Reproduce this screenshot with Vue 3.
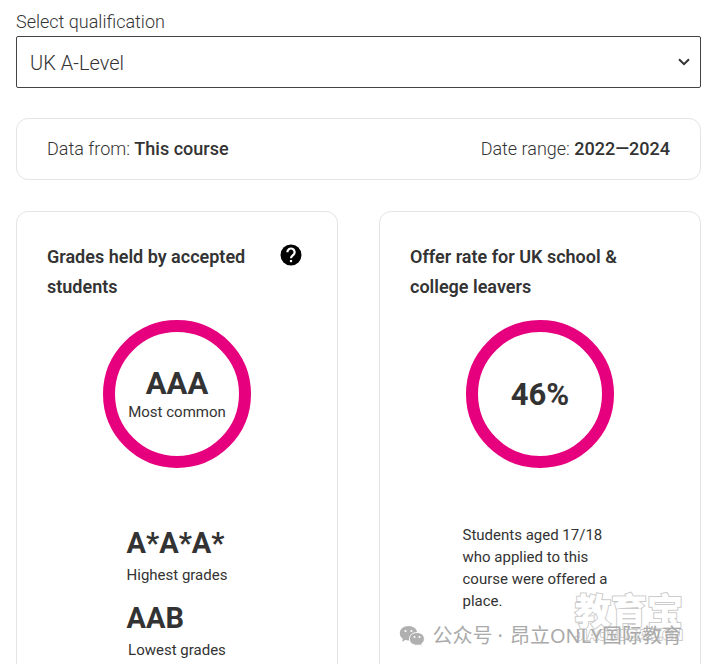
<script setup>
import { ref } from 'vue'

const qualification = ref('UK A-Level')
const qualifications = ['UK A-Level', 'Scottish Higher', 'International Baccalaureate']
</script>

<template>
  <main class="page">
    <div class="field">
      <label class="field-label" for="qualification">Select qualification</label>
      <div class="select-wrap">
        <select id="qualification" v-model="qualification" class="select">
          <option v-for="q in qualifications" :key="q">{{ q }}</option>
        </select>
        <svg class="chevron" viewBox="0 0 14 10" aria-hidden="true">
          <path d="M2 2.3 7 7.2 12 2.3" fill="none" stroke="#333" stroke-width="2" />
        </svg>
      </div>
    </div>

    <section class="summary">
      <p>Data from: <strong>This course</strong></p>
      <p>Date range: <strong>2022—2024</strong></p>
    </section>

    <div class="cards">
      <section class="card">
        <header class="card-head">
          <h2>Grades held by accepted students</h2>
          <button class="help" type="button" aria-label="Help">
            <svg viewBox="0 0 22 22" aria-hidden="true">
              <circle cx="11" cy="11" r="10.5" fill="#000" />
              <path d="M7.4 8.2a3.600 3.600 0 1 1 6.100 2.500c-1.500 1.300-2.500 1.700-2.500 3.600" fill="none" stroke="#fff" stroke-width="2.2" />
              <path d="M9.900 16h2.200v2.200H9.900z" fill="#fff" />
            </svg>
          </button>
        </header>
        <div class="ring">
          <span class="value">AAA</span>
          <span class="caption">Most common</span>
        </div>
        <dl class="grades">
          <div class="grade">
            <dd class="value">A*A*A*</dd>
            <dt class="caption">Highest grades</dt>
          </div>
          <div class="grade">
            <dd class="value">AAB</dd>
            <dt class="caption">Lowest grades</dt>
          </div>
        </dl>
      </section>

      <section class="card">
        <header class="card-head">
          <h2>Offer rate for UK school &amp; college leavers</h2>
        </header>
        <div class="ring">
          <span class="value">46%</span>
        </div>
        <p class="caption note">Students aged 17/18 who applied to this course were offered a place.</p>
      </section>
    </div>

    <div class="brand">
      <span class="brand-name">教育宝</span>
      <span class="brand-site">JIAOYUBAO.CN</span>
    </div>
    <div class="account">
      <svg class="wechat" viewBox="0 0 26 22" aria-hidden="true">
        <path d="M9.5 1C4.500 1 .8 4.100.8 8.200c0 2.300 1.200 4.300 3.100 5.600L3 16.800l3.300-1.700c1 .3 2.100.4 3.200.4 5 0 8.700-3.200 8.700-7.300S14.500 1 9.500 1z" fill="#b0b0b0" />
        <path d="M18 7.500c-4.300 0-7.600 2.800-7.600 6.400s3.300 6.400 7.600 6.400c.9 0 1.800-.1 2.600-.4l2.700 1.500-.7-2.600c1.700-1.200 2.800-2.900 2.800-4.900 0-3.600-3.200-6.400-7.400-6.400z" fill="#b0b0b0" stroke="#fff" stroke-width="1" />
        <g fill="#fff">
          <circle cx="6.500" cy="6" r="1.100" />
          <circle cx="12.400" cy="6" r="1.100" />
          <circle cx="15.500" cy="12" r="1" />
          <circle cx="20.500" cy="12" r="1" />
        </g>
      </svg>
      <span>公众号 ·</span>
      <span>昂立ONLY国际教育</span>
    </div>
  </main>
</template>

<style>
body {
  background: #fff;
}
</style>

<style scoped>
.page {
  position: relative;
  box-sizing: border-box;
  height: 100vh;
  overflow: hidden;
  padding: 8px 3px 0 16px;
  color: #333;
  font-family: Roboto, "Liberation Sans", sans-serif;
  font-size: 18px;
  font-weight: 300;
  line-height: 30px;
}
p, h2, dl, dd {
  margin: 0;
}
strong {
  font-weight: 500;
}
.field-label {
  display: block;
  line-height: 28px;
}
.select-wrap {
  position: relative;
}
.select {
  display: block;
  box-sizing: border-box;
  width: 100%;
  height: 52px;
  padding: 2px 40px 0 13px;
  appearance: none;
  border: 1px solid #444;
  border-radius: 2px;
  background: #fff;
  color: inherit;
  font: inherit;
  font-size: 20px;
}
.chevron {
  position: absolute;
  top: 21px;
  right: 10px;
  width: 14px;
  height: 10px;
  pointer-events: none;
}
.summary {
  display: flex;
  justify-content: space-between;
  margin-top: 30px;
  padding: 15px 30px;
  border: 1px solid #e4e4e4;
  border-radius: 12px;
}
.cards {
  display: grid;
  grid-template-columns: 1fr 1fr;
  gap: 41px;
  margin-top: 31px;
}
.card {
  padding: 30px 30px 40px;
  border: 1px solid #e4e4e4;
  border-radius: 12px;
}
.card-head {
  display: flex;
  justify-content: space-between;
  align-items: flex-start;
  gap: 16px;
}
h2 {
  max-width: 220px;
  font-size: 18px;
  font-weight: 600;
}
.help {
  flex: none;
  width: 22px;
  height: 22px;
  margin: 2px 5px 0 0;
  padding: 0;
  border: 0;
  background: none;
}
.help svg {
  display: block;
  width: 22px;
  height: 22px;
}
.ring {
  display: flex;
  flex-direction: column;
  align-items: center;
  justify-content: center;
  box-sizing: border-box;
  width: 148px;
  height: 148px;
  margin: 18px auto 0;
  padding-top: 2px;
  border: 12px solid #e6007e;
  border-radius: 50%;
}
.value {
  font-size: 31px;
  font-weight: 700;
  line-height: 34px;
}
.caption {
  font-size: 15px;
  font-weight: 400;
  line-height: 22px;
}
.grades {
  display: grid;
  justify-content: center;
  gap: 15px;
  margin-top: 58px;
}
.grade {
  display: grid;
  row-gap: 4px;
}
.grade .value {
  font-size: 29px;
}
.grade .caption {
  text-align: center;
}
.note {
  width: 155px;
  margin: 56px auto 0;
}
.account {
  position: absolute;
  right: 22px;
  bottom: 13px;
  display: flex;
  align-items: center;
  gap: 7px;
  color: #aaa;
  font-family: "Noto Sans", "Noto Sans CJK SC", sans-serif;
  font-size: 20px;
  font-weight: 400;
  white-space: nowrap;
}
.wechat {
  width: 26px;
  height: 22px;
}
.brand {
  position: absolute;
  right: 21px;
  bottom: 22px;
  display: grid;
  justify-items: center;
  row-gap: 2px;
  color: #fff;
  font-family: "Noto Sans CJK SC", sans-serif;
  font-weight: 900;
  paint-order: stroke fill;
  -webkit-text-stroke: 2px #ccc;
}
.brand-name {
  font-size: 36px;
  line-height: 34px;
}
.brand-site {
  font-family: "Liberation Sans", sans-serif;
  font-size: 14px;
  font-weight: 700;
  line-height: 14px;
}
</style>
